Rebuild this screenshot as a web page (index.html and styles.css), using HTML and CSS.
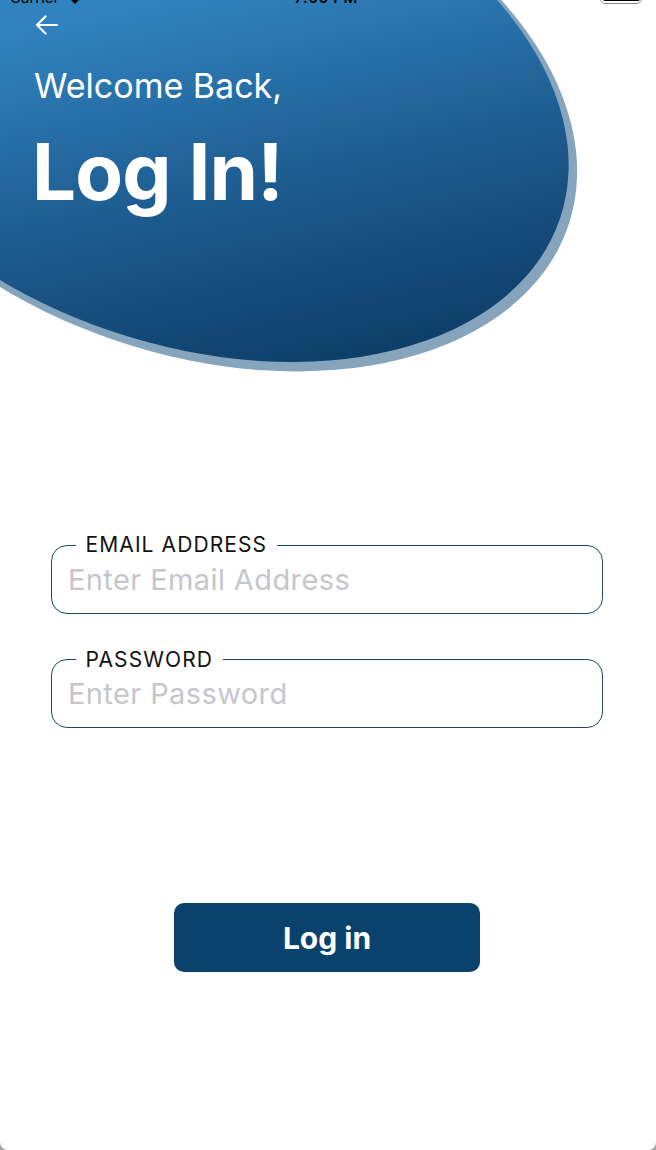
FILE: index.html
```html
<!DOCTYPE html>
<html lang="en">
<head>
<meta charset="utf-8">
<title>Log In</title>
<link rel="stylesheet" href="styles.css">
</head>
<body>
<div class="screen">
  <header class="hero">
    <svg class="hero-bg" width="656" height="400" viewBox="0 0 656 400" aria-hidden="true">
      <defs>
        <linearGradient id="heroGrad" gradientUnits="userSpaceOnUse" x1="150" y1="0" x2="370" y2="360">
          <stop offset="0" stop-color="#3183c0"/>
          <stop offset="0.5" stop-color="#1d5b8f"/>
          <stop offset="1" stop-color="#0b3a63"/>
        </linearGradient>
      </defs>
      <ellipse class="hero-ring" cx="197" cy="100" rx="392" ry="254" transform="rotate(18.7 197 100)"/>
      <ellipse fill="url(#heroGrad)" cx="192" cy="94" rx="388.5" ry="250.5" transform="rotate(18.7 192 94)"/>
    </svg>

    <div class="status">
      <span class="carrier">Carrier
        <svg class="wifi" width="16" height="12" viewBox="0 0 16 12" aria-hidden="true"><path d="M8 12 L0.5 4.2 A11 11 0 0 1 15.5 4.2 Z"/></svg>
      </span>
      <span class="time">7:00 PM</span>
      <span class="battery"><span class="battery-fill"></span></span>
    </div>

    <button class="back" type="button" aria-label="Back">
      <svg width="26" height="24" viewBox="0 0 26 24" aria-hidden="true"><path d="M3 12 H23 M11.5 3.5 L3 12 L11.5 20.5"/></svg>
    </button>

    <p class="welcome">Welcome Back,</p>
    <h1 class="title">Log In!</h1>
  </header>

  <form class="form">
    <fieldset class="field">
      <legend>EMAIL ADDRESS</legend>
      <input type="email" placeholder="Enter Email Address">
    </fieldset>
    <fieldset class="field">
      <legend>PASSWORD</legend>
      <input type="password" placeholder="Enter Password">
    </fieldset>
    <button class="submit" type="button">Log in</button>
  </form>
</div>
</body>
</html>
```

FILE: styles.css
```css
* { box-sizing: border-box; }

html, body {
  margin: 0;
  padding: 0;
  background: #a3a3a3;
}

body {
  font-family: Inter, "Noto Sans", "Liberation Sans", sans-serif;
}

.screen {
  width: 656px;
  height: 1150px;
  background: #ffffff;
  border-radius: 0 0 8px 8px;
  overflow: hidden;
}

.hero {
  position: relative;
  display: flow-root;
  height: 380px;
}

.hero-bg {
  position: absolute;
  top: 0;
  left: 0;
  display: block;
}

.hero-ring { fill: #86a5bc; }

.status,
.back,
.welcome,
.title {
  position: relative;
}

.status {
  display: grid;
  grid-template-columns: 1fr auto 1fr;
  align-items: center;
  height: 18px;
  margin-top: -11px;
  padding: 0 14px 0 10px;
  font-size: 15px;
  line-height: 18px;
  color: #000;
}

.carrier {
  display: flex;
  align-items: center;
  gap: 8px;
}

.wifi { fill: #000; }

.time {
  font-weight: 600;
  letter-spacing: 0.5px;
}

.battery {
  justify-self: end;
  width: 42px;
  height: 20px;
  border: 1.5px solid #8a8a8a;
  border-radius: 5px;
  padding: 1.5px;
  margin-top: -9px;
}

.battery-fill {
  display: block;
  height: 100%;
  background: #000;
  border-radius: 2px;
}

.back {
  display: block;
  width: 26px;
  height: 24px;
  margin: 6px 0 0 34px;
  padding: 0;
  border: 0;
  background: none;
}

.back svg {
  display: block;
  fill: none;
  stroke: #ffffff;
  stroke-width: 2.2;
  stroke-linecap: round;
  stroke-linejoin: round;
}

.welcome {
  margin: 29px 0 0 34px;
  font-size: 34px;
  line-height: 40px;
  font-weight: 400;
  color: #ffffff;
}

.title {
  margin: 26px 0 0 32px;
  font-size: 78px;
  line-height: 80px;
  font-weight: 700;
  letter-spacing: -0.8px;
  color: #ffffff;
}

.form {
  padding: 153px 53px 0 51px;
}

.field {
  margin: 0 0 34px;
  padding: 0 16px 11.5px;
  min-width: 0;
  border: 1.5px solid #1f4a5c;
  border-radius: 16px;
}

.field legend {
  margin-left: 7.5px;
  padding: 0 10px;
  font-size: 21px;
  line-height: 24px;
  letter-spacing: 1.1px;
  color: #111111;
}

.field input {
  display: block;
  width: 100%;
  height: 44px;
  padding: 0;
  border: 0;
  outline: none;
  background: transparent;
  font-family: inherit;
  font-size: 29px;
  letter-spacing: 0.4px;
  color: #333333;
}

.field input::placeholder {
  color: #c6c6cb;
}

.submit {
  display: block;
  width: 306px;
  height: 69px;
  margin: 175px auto 0;
  padding: 0;
  border: 0;
  border-radius: 10px;
  background: #0a426e;
  color: #ffffff;
  font-family: inherit;
  font-size: 30px;
  font-weight: 700;
}
```
